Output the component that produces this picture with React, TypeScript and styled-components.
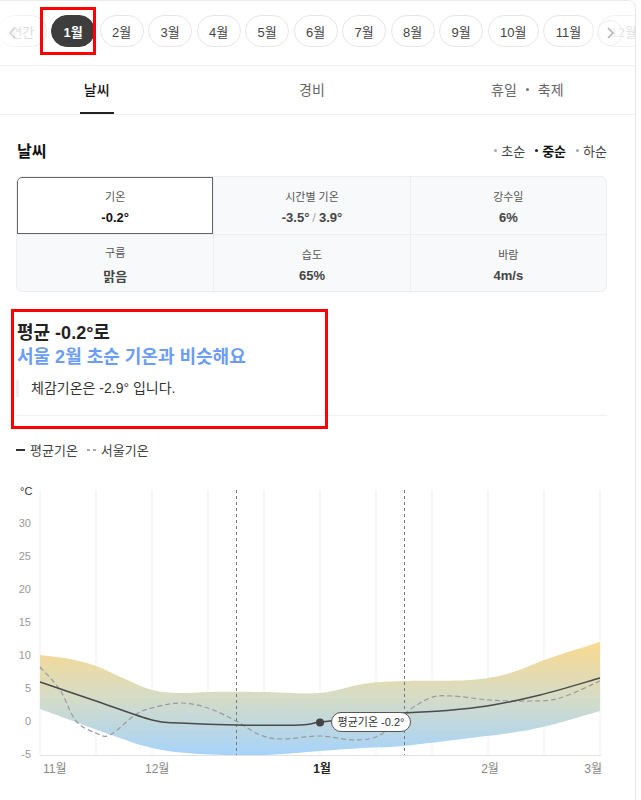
import React from "react";
import styled, { createGlobalStyle } from "styled-components";

const GlobalStyle = createGlobalStyle`
  html, body { margin: 0; padding: 0; background: #fff; }
  body { font-family: "Liberation Sans", "Noto Sans CJK KR", sans-serif; color: #222; }
  * { box-sizing: border-box; }
`;

const Page = styled.div`
  position: relative;
  width: 636px;
  min-height: 800px;
  border-top: 1px solid #ebebeb;
  border-right: 1px solid #e6e6e6;
  border-top-right-radius: 8px;
  overflow: hidden;
  background: #fff;
`;

const ChipBar = styled.div`
  position: relative;
  height: 65px;
  padding-top: 14px;
  border-bottom: 1px solid #eeeeee;
  overflow: hidden;
`;

const ChipTrack = styled.div`
  display: flex;
  gap: 4.5px;
  margin-left: -2px;
  width: max-content;
`;

const Chip = styled.div<{ $active?: boolean; $faded?: boolean }>`
  height: 32px;
  padding: 0 11.4px;
  border-radius: 16px;
  display: flex;
  align-items: center;
  font-size: 13px;
  white-space: nowrap;
  border: 1px solid ${(p) => (p.$active ? "#3d3d3d" : "#e6e6e6")};
  background: ${(p) => (p.$active ? "#3d3d3d" : "#fff")};
  color: ${(p) => (p.$active ? "#fff" : p.$faded ? "#c4c4c4" : "#444")};
  font-weight: ${(p) => (p.$active ? 700 : 400)};
`;

const EdgeFade = styled.div<{ $side: "left" | "right" }>`
  position: absolute;
  top: 0;
  bottom: 1px;
  ${(p) => (p.$side === "left" ? "left: 0; width: 36px;" : "right: 0; width: 50px;")}
  background: ${(p) =>
    p.$side === "left"
      ? "linear-gradient(to right, rgba(255,255,255,0.75), rgba(255,255,255,0.35))"
      : "linear-gradient(to right, rgba(255,255,255,0), rgba(255,255,255,0.5) 30%, rgba(255,255,255,0.5))"};
  display: flex;
  align-items: center;
  ${(p) => (p.$side === "left" ? "padding-left: 8px;" : "padding-left: 12px;")}
`;

const ArrowCircle = styled.div`
  width: 26px;
  height: 26px;
  border-radius: 50%;
  border: 1px solid #eeeeee;
  background: rgba(255, 255, 255, 0.3);
  display: flex;
  align-items: center;
  justify-content: center;
`;

const TabBar = styled.div`
  display: grid;
  grid-template-columns: repeat(3, 1fr);
  width: 646px;
  margin-left: -11px;
  height: 49px;
  border-bottom: 1px solid #eeeeee;
`;

const Tab = styled.div`
  display: flex;
  justify-content: center;
  height: 48px;
`;

const TabLabel = styled.span<{ $active?: boolean }>`
  display: inline-flex;
  align-items: center;
  height: 48px;
  padding: 0 4px;
  font-size: 14px;
  color: ${(p) => (p.$active ? "#111" : "#666")};
  font-weight: ${(p) => (p.$active ? 500 : 400)};
  border-bottom: 2px solid ${(p) => (p.$active ? "#222" : "transparent")};
`;

const Dot = styled.span`
  display: inline-block;
  width: 3px;
  height: 3px;
  border-radius: 50%;
  background: #777;
  margin: 0 9px;
`;

const Content = styled.div`
  padding: 23px 28px 0 16px;
`;

const SectionHead = styled.div`
  display: flex;
  align-items: center;
  justify-content: space-between;
  height: 24px;
  padding-left: 1px;
`;

const SectionTitle = styled.h2`
  margin: 0;
  font-size: 16px;
  font-weight: 700;
  color: #111;
`;

const PeriodList = styled.div`
  display: flex;
  gap: 10px;
  font-size: 13px;
`;

const Period = styled.span<{ $active?: boolean }>`
  display: inline-flex;
  align-items: center;
  gap: 4px;
  color: ${(p) => (p.$active ? "#111" : "#444")};
  font-weight: ${(p) => (p.$active ? 700 : 400)};
  &::before {
    content: "";
    width: 3px;
    height: 3px;
    border-radius: 50%;
    background: ${(p) => (p.$active ? "#222" : "#aaa")};
  }
`;

const StatGrid = styled.div`
  margin-top: 14px;
  display: grid;
  grid-template-columns: repeat(3, 1fr);
  background: #f8f9fb;
  border: 1px solid #eceef1;
  border-radius: 6px;
  overflow: hidden;
`;

const StatCell = styled.div<{ $selected?: boolean; $col: number; $row: number }>`
  height: 57px;
  display: flex;
  flex-direction: column;
  align-items: center;
  justify-content: center;
  gap: 6px;
  padding-top: 2px;
  background: ${(p) => (p.$selected ? "#fff" : "transparent")};
  border-left: ${(p) => (p.$col > 0 ? "1px solid #eceef1" : "none")};
  border-top: ${(p) => (p.$row > 0 ? "1px solid #eceef1" : "none")};
  ${(p) => (p.$selected ? "box-shadow: inset 0 0 0 1px #666; border-top-left-radius: 5px;" : "")}
`;

const StatLabel = styled.span`
  font-size: 11px;
  color: #555;
`;

const StatValue = styled.span<{ $strong?: boolean }>`
  font-size: 13px;
  font-weight: 700;
  color: ${(p) => (p.$strong ? "#111" : "#444")};
`;

const Slash = styled.span`
  color: #aaa;
  font-weight: 400;
  margin: 0 3px;
`;

const Summary = styled.div`
  margin-top: 29px;
  padding-left: 1px;
`;

const SummaryLine = styled.div<{ $accent?: boolean }>`
  font-size: 18px;
  line-height: 24px;
  font-weight: 700;
  color: ${(p) => (p.$accent ? "#6b9cf6" : "#222")};
`;

const FeelsLike = styled.div`
  margin-top: 11px;
  margin-left: -1px;
  padding-left: 12px;
  border-left: 3px solid #eef0f4;
  font-size: 14px;
  line-height: 17px;
  color: #333;
`;

const Divider = styled.div`
  margin-top: 18px;
  height: 1px;
  background: #f0f0f0;
`;

const Legend = styled.div`
  margin-top: 24px;
  display: flex;
  gap: 9px;
  font-size: 13px;
  color: #444;
`;

const LegendItem = styled.span<{ $dashed?: boolean }>`
  display: inline-flex;
  align-items: center;
  gap: 5px;
  &::before {
    content: "";
    width: 9px;
    height: 2px;
    background: ${(p) =>
      p.$dashed
        ? "linear-gradient(to right, #aaa 0 3px, transparent 3px 6px, #aaa 6px 9px)"
        : "#333"};
  }
`;

const ChartWrap = styled.div`
  margin-left: -16px;
  margin-top: 17px;
`;

const Highlight = styled.div<{ $l: number; $t: number; $w: number; $h: number }>`
  position: absolute;
  left: ${(p) => p.$l}px;
  top: ${(p) => p.$t}px;
  width: ${(p) => p.$w}px;
  height: ${(p) => p.$h}px;
  border: 3px solid #f00;
  pointer-events: none;
`;

type P = [number, number];

function smooth(pts: P[]): string {
  let d = `M${pts[0][0]},${pts[0][1]}`;
  for (let i = 0; i < pts.length - 1; i++) {
    const p0 = pts[i - 1] || pts[i];
    const p1 = pts[i];
    const p2 = pts[i + 1];
    const p3 = pts[i + 2] || p2;
    const c1x = p1[0] + (p2[0] - p0[0]) / 6;
    const c1y = p1[1] + (p2[1] - p0[1]) / 6;
    const c2x = p2[0] - (p3[0] - p1[0]) / 6;
    const c2y = p2[1] - (p3[1] - p1[1]) / 6;
    d += ` C${c1x.toFixed(1)},${c1y.toFixed(1)} ${c2x.toFixed(1)},${c2y.toFixed(1)} ${p2[0]},${p2[1]}`;
  }
  return d;
}

const OY = 478; // page y of svg top

const sh = (pts: P[]): P[] => pts.map(([x, y]) => [x, y - OY]);

const upper: P[] = sh([
  [40, 657], [70, 661], [96, 668], [125, 681], [152, 692], [180, 695], [210, 694],
  [264, 694], [320, 695], [363, 686], [403, 683], [470, 682], [510, 675], [547, 661], [600, 644],
]);
const lower: P[] = sh([
  [40, 711], [70, 722], [100, 733], [152, 750], [200, 756], [264, 757], [320, 753],
  [363, 750], [403, 748], [470, 740], [510, 735], [547, 728], [600, 713],
]);
const avg: P[] = sh([
  [40, 684], [96, 703], [152, 722], [180, 725], [236, 727], [300, 727], [320, 724],
  [360, 720], [404, 715], [440, 713], [487, 708], [540, 697], [600, 680],
]);
const seoul: P[] = sh([
  [40, 669], [60, 692], [76, 723], [96, 735], [110, 737], [135, 717], [152, 710],
  [180, 705], [208, 710], [236, 723], [260, 737], [283, 741], [320, 738], [355, 742],
  [380, 737], [404, 716], [430, 700], [452, 698], [490, 702], [530, 703], [560, 700], [600, 683],
]);

const bandPath =
  smooth(upper) +
  " L" + lower[lower.length - 1][0] + "," + lower[lower.length - 1][1] +
  smooth([...lower].reverse()).replace(/^M[^ ]+/, "") +
  " Z";

const yTicks = [30, 25, 20, 15, 10, 5, 0, -5];
const yOf = (v: number) => 723 - v * 6.6 - OY;

const TempChart = () => (
  <svg width={636} height={316} viewBox="0 0 636 316" style={{ display: "block" }}>
    <defs>
      <linearGradient id="band" x1="0" y1={640 - OY} x2="0" y2={757 - OY} gradientUnits="userSpaceOnUse">
        <stop offset="0" stopColor="#fdd98a" />
        <stop offset="0.5" stopColor="#d6dcc6" />
        <stop offset="1" stopColor="#a6d3fb" />
      </linearGradient>
      <clipPath id="plot">
        <rect x={40} y={0} width={560} height={757 - OY} />
      </clipPath>
    </defs>
    <text x={20} y={497 - OY} fontSize={11} fill="#333" fontFamily="Liberation Sans, sans-serif">°C</text>
    {yTicks.map((v) => (
      <text key={v} x={31} y={yOf(v) + 4} fontSize={11} fill="#999" textAnchor="end" fontFamily="Liberation Sans, sans-serif">
        {v}
      </text>
    ))}
    {Array.from({ length: 11 }, (_, i) => (
      <line key={i} x1={40 + 56 * i} x2={40 + 56 * i} y1={492 - OY} y2={757 - OY} stroke="#efefef" strokeWidth={1} />
    ))}
    <path d={bandPath} fill="url(#band)" clipPath="url(#plot)" />
    <line x1={40} x2={601} y1={757.5 - OY} y2={757.5 - OY} stroke="#e2e2e2" strokeWidth={1} />
    <line x1={236.5} x2={236.5} y1={492 - OY} y2={757 - OY} stroke="#777" strokeWidth={1} strokeDasharray="3 3" />
    <line x1={404.5} x2={404.5} y1={492 - OY} y2={757 - OY} stroke="#777" strokeWidth={1} strokeDasharray="3 3" />
    <path d={smooth(seoul)} fill="none" stroke="#9a9a9a" strokeWidth={1.2} strokeDasharray="5 3" />
    <path d={smooth(avg)} fill="none" stroke="#4a4a4a" strokeWidth={1.5} />
    <circle cx={320} cy={724.5 - OY} r={4} fill="#444" />
    <rect x={331.5} y={714.5 - OY} width={79} height={19} rx={9.5} fill="#fff" stroke="#555" strokeWidth={1} />
    <text x={371} y={728 - OY} fontSize={11} fill="#333" textAnchor="middle" fontFamily="Liberation Sans, Noto Sans CJK KR, sans-serif">
      평균기온 -0.2°
    </text>
    <g fontSize={12} fill="#888" fontFamily="Liberation Sans, Noto Sans CJK KR, sans-serif">
      <text x={43} y={775 - OY}>11월</text>
      <text x={145} y={775 - OY}>12월</text>
      <text x={322} y={775 - OY} textAnchor="middle" fill="#222" fontWeight={700}>1월</text>
      <text x={490} y={775 - OY} textAnchor="middle">2월</text>
      <text x={602} y={775 - OY} textAnchor="end">3월</text>
    </g>
  </svg>
);

const months = ["2월", "3월", "4월", "5월", "6월", "7월", "8월", "9월", "10월", "11월"];

const stats = [
  { label: "기온", value: "-0.2°", selected: true },
  { label: "시간별 기온", value: "range" },
  { label: "강수일", value: "6%" },
  { label: "구름", value: "맑음" },
  { label: "습도", value: "65%" },
  { label: "바람", value: "4m/s" },
];

export default function App() {
  return (
    <>
      <GlobalStyle />
      <Page>
        <ChipBar>
          <ChipTrack>
            <Chip $faded>연간</Chip>
            <Chip $active>1월</Chip>
            {months.map((m) => (
              <Chip key={m}>{m}</Chip>
            ))}
            <Chip $faded>12월</Chip>
          </ChipTrack>
          <EdgeFade $side="left">
            <svg width="10" height="12" viewBox="0 0 10 12">
              <path d="M7 1 L2 6 L7 11" fill="none" stroke="#d0d0d0" strokeWidth="1.5" />
            </svg>
          </EdgeFade>
          <EdgeFade $side="right">
            <ArrowCircle>
              <svg width="10" height="12" viewBox="0 0 10 12">
                <path d="M3 1 L8 6 L3 11" fill="none" stroke="#b0b0b0" strokeWidth="1.5" />
              </svg>
            </ArrowCircle>
          </EdgeFade>
        </ChipBar>

        <TabBar>
          <Tab><TabLabel $active>날씨</TabLabel></Tab>
          <Tab><TabLabel>경비</TabLabel></Tab>
          <Tab><TabLabel>휴일<Dot />축제</TabLabel></Tab>
        </TabBar>

        <Content>
          <SectionHead>
            <SectionTitle>날씨</SectionTitle>
            <PeriodList>
              <Period>초순</Period>
              <Period $active>중순</Period>
              <Period>하순</Period>
            </PeriodList>
          </SectionHead>

          <StatGrid>
            {stats.map((s, i) => (
              <StatCell key={s.label} $selected={s.selected} $col={i % 3} $row={Math.floor(i / 3)}>
                <StatLabel>{s.label}</StatLabel>
                <StatValue $strong={s.selected}>
                  {s.value === "range" ? (
                    <>-3.5°<Slash>/</Slash>3.9°</>
                  ) : (
                    s.value
                  )}
                </StatValue>
              </StatCell>
            ))}
          </StatGrid>

          <Summary>
            <SummaryLine>평균 -0.2°로</SummaryLine>
            <SummaryLine $accent>서울 2월 초순 기온과 비슷해요</SummaryLine>
            <FeelsLike>체감기온은 -2.9° 입니다.</FeelsLike>
          </Summary>

          <Divider />

          <Legend>
            <LegendItem>평균기온</LegendItem>
            <LegendItem $dashed>서울기온</LegendItem>
          </Legend>

          <ChartWrap>
            <TempChart />
          </ChartWrap>
        </Content>

        <Highlight $l={40} $t={6} $w={56} $h={48} />
        <Highlight $l={11} $t={308} $w={317} $h={120} />
      </Page>
    </>
  );
}
